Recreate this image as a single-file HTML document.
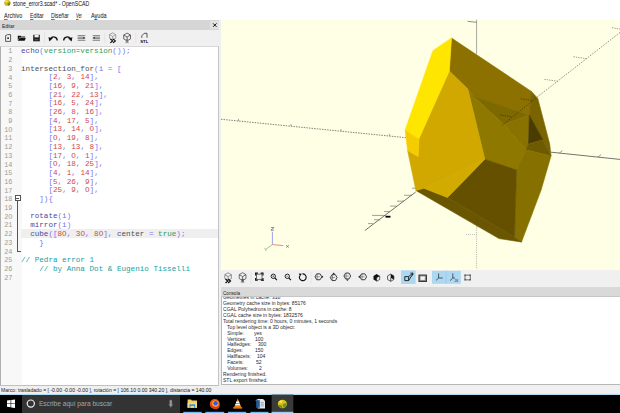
<!DOCTYPE html>
<html><head><meta charset="utf-8">
<style>
*{margin:0;padding:0;box-sizing:border-box}
html,body{width:620px;height:413px;overflow:hidden;background:#fff;font-family:"Liberation Sans",sans-serif;position:relative}
.a{position:absolute}
.t{position:absolute;white-space:pre;line-height:1}
u{text-decoration-thickness:0.4px;text-underline-offset:0.6px;text-decoration-color:#777}
.cl{position:absolute;left:21px;font-family:"Liberation Mono",monospace;font-size:7.62px;line-height:8.7px;white-space:pre;color:#333}
.lnum{position:absolute;left:0;width:12.4px;text-align:right;font-family:"Liberation Mono",monospace;font-size:6.8px;line-height:8.7px;color:#9a9a9a}
.k{color:#4b4b9b}.g{color:#2aa05a}.p{color:#7676f2}.n{color:#d04848}.c{color:#20a0a0}.d{color:#505050}
.cn{position:absolute;font-size:5.6px;line-height:5.9px;white-space:pre;color:#2a2a2a;transform:scaleX(0.9);transform-origin:0 0}
</style></head><body>
<!-- title bar -->
<div class="a" style="left:0;top:0;width:620px;height:20px;background:#fff"></div>
<div class="t" style="left:13.2px;top:0.6px;font-size:6.8px;color:#111;transform:scaleX(0.77);transform-origin:0 0">stone_error3.scad* - OpenSCAD</div>
<div class="t" style="left:3.9px;top:13.0px;font-size:6.4px;color:#111;transform:scaleX(0.858);transform-origin:0 0"><u>A</u>rchivo</div>
<div class="t" style="left:29.8px;top:13.0px;font-size:6.4px;color:#111;transform:scaleX(0.820);transform-origin:0 0"><u>E</u>ditar</div>
<div class="t" style="left:51.1px;top:13.0px;font-size:6.4px;color:#111;transform:scaleX(0.803);transform-origin:0 0"><u>D</u>iseñar</div>
<div class="t" style="left:76.3px;top:13.0px;font-size:6.4px;color:#111;transform:scaleX(0.614);transform-origin:0 0"><u>V</u>er</div>
<div class="t" style="left:91.4px;top:13.0px;font-size:6.4px;color:#111;transform:scaleX(0.865);transform-origin:0 0">A<u>y</u>uda</div>

<!-- editor dock -->
<div class="a" style="left:0;top:20px;width:219px;height:9.5px;background:#d6d6d6"></div>
<div class="t" style="left:1.9px;top:23.6px;font-size:5.4px;color:#1a1a1a;transform:scaleX(0.89);transform-origin:0 0">Editar</div>
<div class="a" style="left:209.5px;top:20.5px;width:9.5px;height:8.8px;background:#e2e2e2"></div>

<div class="a" style="left:0;top:29.5px;width:219px;height:16px;background:#f0f0f0"></div>
<div class="a" style="left:0;top:45.5px;width:219px;height:340px;background:#fff;border-left:1px solid #b0b0b0;border-right:1px solid #c4c4c4;border-top:1px solid #d8d8d8;border-bottom:1px solid #c0c0c0"></div>
<div class="a" style="left:1px;top:46.5px;width:20.5px;height:338px;background:#f8f8f8"></div>
<div class="a" style="left:21px;top:229.3px;width:197px;height:8.6px;background:#efefef"></div>
<div class="a" style="left:14.6px;top:194.8px;width:6.2px;height:6.2px;border:0.8px solid #555;background:#fff"></div>
<div class="a" style="left:16px;top:197.5px;width:3.4px;height:0.8px;background:#555"></div>
<div class="a" style="left:17.3px;top:201px;width:0.8px;height:50.5px;background:#555"></div>
<div class="a" style="left:17.3px;top:250.8px;width:3.8px;height:0.8px;background:#555"></div>

<div class="cl" style="top:47.10px"><span class="k">echo</span><span class="p">(</span><span class="g">version=version</span><span class="p">());</span></div>
<div class="lnum" style="top:47.40px">1</div>
<div class="cl" style="top:55.80px"></div>
<div class="lnum" style="top:56.10px">2</div>
<div class="cl" style="top:64.50px"><span class="d">intersection_for</span><span class="p">(i = [</span></div>
<div class="lnum" style="top:64.80px">3</div>
<div class="cl" style="top:73.20px">      <span class="p">[</span><span class="n">2</span><span class="p">, </span><span class="n">3</span><span class="p">, </span><span class="n">14</span><span class="p">],</span></div>
<div class="lnum" style="top:73.50px">4</div>
<div class="cl" style="top:81.90px">      <span class="p">[</span><span class="n">16</span><span class="p">, </span><span class="n">9</span><span class="p">, </span><span class="n">21</span><span class="p">],</span></div>
<div class="lnum" style="top:82.20px">5</div>
<div class="cl" style="top:90.60px">      <span class="p">[</span><span class="n">21</span><span class="p">, </span><span class="n">22</span><span class="p">, </span><span class="n">13</span><span class="p">],</span></div>
<div class="lnum" style="top:90.90px">6</div>
<div class="cl" style="top:99.30px">      <span class="p">[</span><span class="n">16</span><span class="p">, </span><span class="n">5</span><span class="p">, </span><span class="n">24</span><span class="p">],</span></div>
<div class="lnum" style="top:99.60px">7</div>
<div class="cl" style="top:108.00px">      <span class="p">[</span><span class="n">26</span><span class="p">, </span><span class="n">8</span><span class="p">, </span><span class="n">16</span><span class="p">],</span></div>
<div class="lnum" style="top:108.30px">8</div>
<div class="cl" style="top:116.70px">      <span class="p">[</span><span class="n">4</span><span class="p">, </span><span class="n">17</span><span class="p">, </span><span class="n">5</span><span class="p">],</span></div>
<div class="lnum" style="top:117.00px">9</div>
<div class="cl" style="top:125.40px">      <span class="p">[</span><span class="n">13</span><span class="p">, </span><span class="n">14</span><span class="p">, </span><span class="n">O</span><span class="p">],</span></div>
<div class="lnum" style="top:125.70px">1O</div>
<div class="cl" style="top:134.10px">      <span class="p">[</span><span class="n">O</span><span class="p">, </span><span class="n">19</span><span class="p">, </span><span class="n">8</span><span class="p">],</span></div>
<div class="lnum" style="top:134.40px">11</div>
<div class="cl" style="top:142.80px">      <span class="p">[</span><span class="n">13</span><span class="p">, </span><span class="n">13</span><span class="p">, </span><span class="n">8</span><span class="p">],</span></div>
<div class="lnum" style="top:143.10px">12</div>
<div class="cl" style="top:151.50px">      <span class="p">[</span><span class="n">17</span><span class="p">, </span><span class="n">O</span><span class="p">, </span><span class="n">1</span><span class="p">],</span></div>
<div class="lnum" style="top:151.80px">13</div>
<div class="cl" style="top:160.20px">      <span class="p">[</span><span class="n">O</span><span class="p">, </span><span class="n">18</span><span class="p">, </span><span class="n">25</span><span class="p">],</span></div>
<div class="lnum" style="top:160.50px">14</div>
<div class="cl" style="top:168.90px">      <span class="p">[</span><span class="n">4</span><span class="p">, </span><span class="n">1</span><span class="p">, </span><span class="n">14</span><span class="p">],</span></div>
<div class="lnum" style="top:169.20px">15</div>
<div class="cl" style="top:177.60px">      <span class="p">[</span><span class="n">5</span><span class="p">, </span><span class="n">26</span><span class="p">, </span><span class="n">9</span><span class="p">],</span></div>
<div class="lnum" style="top:177.90px">16</div>
<div class="cl" style="top:186.30px">      <span class="p">[</span><span class="n">25</span><span class="p">, </span><span class="n">9</span><span class="p">, </span><span class="n">O</span><span class="p">],</span></div>
<div class="lnum" style="top:186.60px">17</div>
<div class="cl" style="top:195.00px">    <span class="p">]){</span></div>
<div class="lnum" style="top:195.30px">18</div>
<div class="cl" style="top:203.70px"></div>
<div class="lnum" style="top:204.00px">19</div>
<div class="cl" style="top:212.40px">  <span class="k">rotate</span><span class="p">(i)</span></div>
<div class="lnum" style="top:212.70px">2O</div>
<div class="cl" style="top:221.10px">  <span class="k">mirror</span><span class="p">(i)</span></div>
<div class="lnum" style="top:221.40px">21</div>
<div class="cl" style="top:229.80px">  <span class="k">cube</span><span class="p">([</span><span class="n">8O</span><span class="p">, </span><span class="n">3O</span><span class="p">, </span><span class="n">8O</span><span class="p">], </span><span class="d">center</span><span class="p"> = </span><span class="g">true</span><span class="p">);</span></div>
<div class="lnum" style="top:230.10px">22</div>
<div class="cl" style="top:238.50px">    <span class="p">}</span></div>
<div class="lnum" style="top:238.80px">23</div>
<div class="cl" style="top:247.20px"></div>
<div class="lnum" style="top:247.50px">24</div>
<div class="cl" style="top:255.90px"><span class="c">// Pedra error 1</span></div>
<div class="lnum" style="top:256.20px">25</div>
<div class="cl" style="top:264.60px">    <span class="c">// by Anna Dot &amp; Eugenio Tisselli</span></div>
<div class="lnum" style="top:264.90px">26</div>
<div class="cl" style="top:273.30px"></div>
<div class="lnum" style="top:273.60px">27</div>

<!-- 3D view -->
<div class="a" style="left:219px;top:20px;width:401px;height:250px;background:#f0f0f0"></div>
<div class="a" style="left:221px;top:20px;width:399px;height:249.5px;background:#ffffe5"></div>
<svg class="a" style="left:0;top:0" width="620" height="413" viewBox="0 0 620 413" id="view">
<line x1="476.6" y1="19.5" x2="476.6" y2="54" stroke="#a8a8a0" stroke-width="1"/>
<line x1="467.6" y1="21.3" x2="476.6" y2="22.3" stroke="#606060" stroke-width="0.7"/>
<line x1="221" y1="119.25" x2="406" y2="137.7" stroke="#5a5a5a" stroke-width="0.75" stroke-dasharray="1.5 1.1"/>
<line x1="238.5" y1="118.79" x2="238.5" y2="120.99" stroke="#707070" stroke-width="0.6"/>
<line x1="291" y1="124.03" x2="291" y2="126.23" stroke="#707070" stroke-width="0.6"/>
<line x1="341" y1="129.01" x2="341" y2="131.21" stroke="#707070" stroke-width="0.6"/>
<line x1="389.4" y1="133.84" x2="389.4" y2="136.04" stroke="#707070" stroke-width="0.6"/>
<line x1="620" y1="32.5" x2="536" y2="98" stroke="#606060" stroke-width="0.7" stroke-dasharray="1.5 1.3"/>
<line x1="551" y1="152.2" x2="620" y2="159.4" stroke="#505050" stroke-width="0.8"/>
<line x1="415.7" y1="192" x2="364.9" y2="230.5" stroke="#505050" stroke-width="0.8"/>
<line x1="476.6" y1="227.6" x2="476.6" y2="269.5" stroke="#909090" stroke-width="0.7" stroke-dasharray="1 1.2"/>
<line x1="466" y1="234.6" x2="476.6" y2="234.6" stroke="#909090" stroke-width="0.6" stroke-dasharray="1 1"/>
<line x1="412" y1="188.2" x2="417" y2="188.2" stroke="#606060" stroke-width="0.6"/>
<line x1="404" y1="195.3" x2="412" y2="195.3" stroke="#606060" stroke-width="0.6"/>
<line x1="397" y1="201.2" x2="404" y2="201.2" stroke="#606060" stroke-width="0.6"/>
<line x1="390" y1="206.1" x2="397" y2="206.1" stroke="#606060" stroke-width="0.6"/>
<line x1="384" y1="211.6" x2="390" y2="211.6" stroke="#606060" stroke-width="0.6"/>
<line x1="372" y1="215.4" x2="386" y2="215.4" stroke="#606060" stroke-width="0.6"/>
<line x1="374" y1="219.8" x2="380" y2="219.8" stroke="#606060" stroke-width="0.6"/>
<line x1="368" y1="223.6" x2="373" y2="223.6" stroke="#606060" stroke-width="0.6"/>
<rect x="385.5" y="215.8" width="5" height="1.8" fill="#000"/>
<line x1="559.4" y1="153.0736" x2="562.4" y2="150.5736" stroke="#505050" stroke-width="0.6"/>
<line x1="598" y1="157.088" x2="601" y2="154.588" stroke="#505050" stroke-width="0.6"/>
<line x1="573.41" y1="56.70" x2="586.41" y2="58.70" stroke="#6a6a6a" stroke-width="0.65" stroke-dasharray="1.4 1"/>
<line x1="544.44" y1="79.30" x2="557.44" y2="81.30" stroke="#6a6a6a" stroke-width="0.65" stroke-dasharray="1.4 1"/>
<line x1="612" y1="27.6" x2="620" y2="29.2" stroke="#6a6a6a" stroke-width="0.65" stroke-dasharray="1.4 1"/>
<line x1="272.4" y1="244.6" x2="272.4" y2="231.8" stroke="#8888f0" stroke-width="0.8"/>
<line x1="272.4" y1="244.6" x2="283.2" y2="245.6" stroke="#f06a6a" stroke-width="0.8"/>
<line x1="272.4" y1="244.6" x2="267.4" y2="248.2" stroke="#50d070" stroke-width="0.8"/>
<path d="M271,227.6 H273.8 L271,230.2 H273.8" fill="none" stroke="#404040" stroke-width="0.6"/>
<path d="M286.2,245.2 L288.8,247.6 M288.8,245.2 L286.2,247.6" fill="none" stroke="#505050" stroke-width="0.6"/>
<path d="M264.6,248.2 L265.8,249.4 L267,248.2 M265.8,249.4 V250.8" fill="none" stroke="#707070" stroke-width="0.6"/>
<polygon points="451.5,38.0 531.5,91.5 529.3,115.1 473.0,96.0 467.8,89.0 449.3,71.0" fill="#8c7000" stroke="#8c7000" stroke-width="0.6" stroke-linejoin="round"/>
<polygon points="531.5,91.5 537.8,98.5 549.7,143.9 551.0,156.0 542.9,139.7 529.3,115.1" fill="#7a6400" stroke="#7a6400" stroke-width="0.6" stroke-linejoin="round"/>
<polygon points="473.0,96.0 529.3,115.1 503.6,124.6" fill="#7e6800" stroke="#7e6800" stroke-width="0.6" stroke-linejoin="round"/>
<polygon points="503.6,124.6 529.3,115.1 528.5,143.9 525.9,149.8" fill="#8a7200" stroke="#8a7200" stroke-width="0.6" stroke-linejoin="round"/>
<polygon points="529.3,115.1 528.5,143.9 542.9,139.7" fill="#4a3c00" stroke="#4a3c00" stroke-width="0.6" stroke-linejoin="round"/>
<polygon points="528.5,143.9 542.9,139.7 551.0,156.0 525.9,149.8" fill="#6e5a00" stroke="#6e5a00" stroke-width="0.6" stroke-linejoin="round"/>
<polygon points="467.8,89.0 473.0,96.0 503.6,124.6 525.9,149.8 516.5,170.0 484.8,159.2" fill="#8f7800" stroke="#8f7800" stroke-width="0.6" stroke-linejoin="round"/>
<polygon points="525.9,149.8 551.0,156.0 541.1,190.0 521.5,242.0 514.5,237.5 516.5,170.0" fill="#857000" stroke="#857000" stroke-width="0.6" stroke-linejoin="round"/>
<polygon points="484.8,159.2 516.5,170.0 514.5,237.5 447.5,197.5" fill="#655000" stroke="#655000" stroke-width="0.6" stroke-linejoin="round"/>
<polygon points="415.9,190.5 423.9,188.3 447.5,197.5 514.5,237.5 521.5,242.0 499.0,238.6" fill="#6a5600" stroke="#6a5600" stroke-width="0.6" stroke-linejoin="round"/>
<polygon points="423.9,188.3 484.8,159.2 447.5,197.5" fill="#d2ab00" stroke="#d2ab00" stroke-width="0.6" stroke-linejoin="round"/>
<polygon points="449.3,71.0 467.8,89.0 484.8,159.2 423.9,188.3 415.9,190.5 407.6,150.6 418.2,156.5 419.0,138.5" fill="#d0a800" stroke="#d0a800" stroke-width="0.6" stroke-linejoin="round"/>
<polygon points="405.2,129.8 419.0,138.5 418.2,156.5 407.6,150.6" fill="#f5cc00" stroke="#f5cc00" stroke-width="0.6" stroke-linejoin="round"/>
<polygon points="451.5,38.0 449.3,71.0 419.0,138.5 405.2,129.8 433.0,50.5" fill="#ffe600" stroke="#ffe600" stroke-width="0.6" stroke-linejoin="round"/>
<line x1="477" y1="219.5" x2="477" y2="228" stroke="#4a3c00" stroke-width="0.6" stroke-dasharray="1 1.2"/>
<line x1="536" y1="98" x2="502" y2="125.5" stroke="#3a3000" stroke-width="0.7" stroke-dasharray="1.2 1.6"/>
<line x1="520.69" y1="98.80" x2="532.69" y2="100.60" stroke="#3a3000" stroke-width="0.65" stroke-dasharray="1.4 1"/>
<line x1="499.92" y1="115.00" x2="511.92" y2="116.80" stroke="#3a3000" stroke-width="0.65" stroke-dasharray="1.4 1"/>

</svg>

<!-- viewer toolbar -->
<div class="a" style="left:219px;top:269.5px;width:401px;height:18px;background:#f0f0f0"></div>
<!-- console -->
<div class="a" style="left:219px;top:287.5px;width:401px;height:98px;background:#f0f0f0"></div>
<div class="a" style="left:220.8px;top:287.4px;width:399.2px;height:10px;background:#d9d9d9;border-bottom:0.7px solid #c6c6c6"></div>
<div class="t" style="left:222.9px;top:290.5px;font-size:5.4px;color:#1a1a1a;transform:scaleX(0.86);transform-origin:0 0">Consola</div>
<div class="a" style="left:220.8px;top:297.3px;width:399.2px;height:88.2px;background:#fff;border-left:1px solid #b8b8b8;border-bottom:1px solid #b8b8b8"></div>
<div class="a" style="left:219px;top:297.3px;width:401px;height:88px;overflow:hidden"><div class="cn" style="left:3.9px;top:-2.00px">Geometries in cache: 318</div>
<div class="cn" style="left:3.9px;top:3.90px">Geometry cache size in bytes: 85176</div>
<div class="cn" style="left:3.9px;top:9.80px">CGAL Polyhedrons in cache: 8</div>
<div class="cn" style="left:3.9px;top:15.70px">CGAL cache size in bytes: 1832576</div>
<div class="cn" style="left:3.9px;top:21.60px">Total rendering time: 0 hours, 0 minutes, 1 seconds</div>
<div class="cn" style="left:3.9px;top:27.50px">   Top level object is a 3D object:</div>
<div class="cn" style="left:3.9px;top:33.40px">   Simple:</div>
<div class="cn" style="left:35.40px;top:33.40px">yes</div>
<div class="cn" style="left:3.9px;top:39.30px">   Vertices:</div>
<div class="cn" style="left:36.40px;top:39.30px">100</div>
<div class="cn" style="left:3.9px;top:45.20px">   Halfedges:</div>
<div class="cn" style="left:39.40px;top:45.20px">300</div>
<div class="cn" style="left:3.9px;top:51.10px">   Edges:</div>
<div class="cn" style="left:36.40px;top:51.10px">150</div>
<div class="cn" style="left:3.9px;top:57.00px">   Halffacets:</div>
<div class="cn" style="left:38.40px;top:57.00px">104</div>
<div class="cn" style="left:3.9px;top:62.90px">   Facets:</div>
<div class="cn" style="left:37.40px;top:62.90px">52</div>
<div class="cn" style="left:3.9px;top:68.80px">   Volumes:</div>
<div class="cn" style="left:40.30px;top:68.80px">2</div>
<div class="cn" style="left:3.9px;top:74.70px">Rendering finished.</div>
<div class="cn" style="left:3.9px;top:80.60px">STL export finished.</div></div>

<!-- status bar -->
<div class="a" style="left:0;top:385.5px;width:620px;height:8.5px;background:#f0f0f0"></div>
<div class="t" style="left:1px;top:388px;font-size:5.6px;color:#1a1a1a;transform:scaleX(0.91);transform-origin:0 0">Marco: trasladado = [ -0.00 -0.00 -0.00 ], rotación = [ 106.10 0.00 340.20 ], distancia = 140.00</div>

<!-- taskbar -->
<div class="a" style="left:0;top:394.5px;width:620px;height:18.5px;background:#000"></div>
<div class="a" style="left:22.1px;top:395px;width:158px;height:18px;background:#333"></div>
<div class="t" style="left:38.9px;top:401.4px;font-size:6.6px;color:#a6a6a6">Escribe aquí para buscar</div>
<svg class="a" style="left:0;top:0" width="620" height="413" viewBox="0 0 620 413">
<path d="M213.1,23.4 L216.5,26.8 M216.5,23.4 L213.1,26.8" stroke="#111" stroke-width="1"/>
<path d="M5.6,35.6 L7.6,34.6 L10.6,34.6 L10.6,41.4 L5.6,41.4 Z" fill="none" stroke="#333" stroke-width="0.8"/>
<rect x="7.3" y="37.4" width="1.6" height="1.6" fill="#222"/>
<path d="M17.8,35.8 L20.6,35.8 L21.2,36.6 L25.2,36.6 L25.2,37.6 L19.4,37.6 L17.8,40.6 Z" fill="#111"/>
<path d="M19.6,38 L25.8,38 L24.6,40.8 L17.8,40.8 Z" fill="#111"/>
<path d="M33.2,34.8 L39.8,34.8 L39.8,41.3 L33.2,41.3 Z" fill="#1a1a1a"/>
<rect x="34.5" y="34.8" width="4.2" height="2.6" fill="#f0f0f0"/>
<rect x="34.6" y="39" width="3.8" height="1.4" fill="#555"/>
<line x1="44.5" y1="32.8" x2="44.5" y2="43" stroke="#dadada" stroke-width="0.6"/>
<line x1="104.8" y1="32.8" x2="104.8" y2="43" stroke="#dadada" stroke-width="0.6"/>
<line x1="135.8" y1="32.8" x2="135.8" y2="43" stroke="#dadada" stroke-width="0.6"/>
<path d="M57.2,40.4 A3.5,3.4 0 0 0 50.6,38.8" fill="none" stroke="#111" stroke-width="1.3"/>
<path d="M48.4,37.2 L52.8,38.2 L49.4,41.4 Z" fill="#111"/>
<path d="M63.7,40.4 A3.5,3.4 0 0 1 70.3,38.8" fill="none" stroke="#111" stroke-width="1.3"/>
<path d="M72.5,37.2 L68.1,38.2 L71.5,41.4 Z" fill="#111"/>
<path d="M77.6,35.6 H85.4 M77.6,37.2 H83 M77.6,38.6 H83 M77.6,40.3 H85.4" stroke="#555" stroke-width="0.7"/>
<path d="M83.2,36.6 L85.6,37.9 L83.2,39.2 Z" fill="#333"/>
<path d="M92.6,35.6 H100 M95,37.2 H100 M95,38.6 H100 M92.6,40.3 H100" stroke="#555" stroke-width="0.7"/>
<path d="M94.8,36.6 L92.4,37.9 L94.8,39.2 Z" fill="#333"/>
<polygon points="112.60,32.80 109.48,34.60 109.48,38.20 112.60,40.00 115.72,38.20 115.72,34.60" fill="none" stroke="#7a7a7a" stroke-width="0.65"/><path d="M109.48,34.60 L112.60,36.40 L115.72,34.60 M112.60,36.40 L112.60,40.00" stroke="#7a7a7a" stroke-width="0.65" fill="none"/>
<path d="M110.3,38.9 L112.6,40.9 L110.3,42.9 M113,38.9 L115.3,40.9 L113,42.9" fill="none" stroke="#111" stroke-width="1.25"/>
<polygon points="127.10,33.10 123.72,35.05 123.72,38.95 127.10,40.90 130.48,38.95 130.48,35.05" fill="none" stroke="#3a3a3a" stroke-width="0.75"/><path d="M123.72,35.05 L127.10,37.00 L130.48,35.05 M127.10,37.00 L127.10,40.90" stroke="#3a3a3a" stroke-width="0.75" fill="none"/>
<path d="M126.3,39.6 L127.9,39.6 L127.9,42 L126.3,42 Z M125.4,42.6 H128.8" fill="#777" stroke="#777" stroke-width="0.6"/>
<path d="M141.8,37.8 V35.8 L144.2,33.3 H147 V37.8" fill="none" stroke="#222" stroke-width="0.75" stroke-linejoin="miter"/>
<text x="144.3" y="42.6" font-family="Liberation Sans" font-weight="bold" font-size="4.3" text-anchor="middle" fill="#111">STL</text>
<polygon points="228.10,272.80 224.81,274.70 224.81,278.50 228.10,280.40 231.39,278.50 231.39,274.70" fill="none" stroke="#6a6a6a" stroke-width="0.7"/><path d="M224.81,274.70 L228.10,276.60 L231.39,274.70 M228.10,276.60 L228.10,280.40" stroke="#6a6a6a" stroke-width="0.7" fill="none"/>
<path d="M225.5,279 L227.8,281 L225.5,283 M228.2,279 L230.5,281 L228.2,283" fill="none" stroke="#111" stroke-width="1.25"/>
<polygon points="242.60,272.70 239.22,274.65 239.22,278.55 242.60,280.50 245.98,278.55 245.98,274.65" fill="none" stroke="#444" stroke-width="0.75"/><path d="M239.22,274.65 L242.60,276.60 L245.98,274.65 M242.60,276.60 L242.60,280.50" stroke="#444" stroke-width="0.75" fill="none"/>
<path d="M241.8,279 L243.4,279 L243.4,281.6 L241.8,281.6 Z M240.8,282.2 H244.4" fill="#555" stroke="#555" stroke-width="0.6"/>
<line x1="251" y1="272" x2="251" y2="284" stroke="#dcdcdc" stroke-width="0.6"/>
<rect x="256.6" y="274.1" width="5.4" height="5.2" fill="none" stroke="#333" stroke-width="0.7"/>
<path d="M255.6,275.4 V273.1 H257.9 M260.7,273.1 H263 V275.4 M255.6,278 V280.3 H257.9 M260.7,280.3 H263 V278" fill="none" stroke="#111" stroke-width="1.1"/>
<line x1="261.8" y1="279.1" x2="263.6" y2="281" stroke="#111" stroke-width="1"/>
<circle cx="273.3" cy="276.3" r="2.2" fill="none" stroke="#111" stroke-width="0.9"/>
<line x1="274.8" y1="277.8" x2="276.90000000000003" y2="280.2" stroke="#111" stroke-width="1.1"/>
<line x1="272.3" y1="276.3" x2="274.3" y2="276.3" stroke="#333" stroke-width="0.5"/>
<circle cx="287.3" cy="276.3" r="2.2" fill="none" stroke="#111" stroke-width="0.9"/>
<line x1="288.8" y1="277.8" x2="290.90000000000003" y2="280.2" stroke="#111" stroke-width="1.1"/>
<line x1="286.3" y1="276.3" x2="288.3" y2="276.3" stroke="#333" stroke-width="0.5"/>
<line x1="273.3" y1="275.3" x2="273.3" y2="277.3" stroke="#333" stroke-width="0.5"/>
<path d="M299.6,276 A3.4,3.4 0 1 0 302.4,273.9" fill="none" stroke="#111" stroke-width="1.15"/>
<path d="M298.8,273.6 L301.8,273.8 L300,276.6 Z" fill="#111"/>
<line x1="311.2" y1="272" x2="311.2" y2="284" stroke="#e2e2e2" stroke-width="0.6"/>
<polygon points="321.80,276.80 320.10,273.86 316.70,273.86 315.00,276.80 316.70,279.74 320.10,279.74" fill="none" stroke="#222" stroke-width="0.85"/><path d="M317.20,273.90 V279.70 M315.20,276.80 H319.90" stroke="#444" stroke-width="0.5"/>
<path d="M321.8,275.4 L323.4,276.8 L321.8,278.2 Z" fill="#222"/>
<polygon points="337.10,277.60 335.40,274.66 332.00,274.66 330.30,277.60 332.00,280.54 335.40,280.54" fill="none" stroke="#222" stroke-width="0.85"/><path d="M332.50,274.70 V280.50 M330.50,277.60 H335.20" stroke="#444" stroke-width="0.5"/>
<path d="M332.3,274.2 L333.7,272.6 L335.1,274.2 Z" fill="#222"/>
<polygon points="350.70,276.00 349.00,273.06 345.60,273.06 343.90,276.00 345.60,278.94 349.00,278.94" fill="none" stroke="#222" stroke-width="0.85"/><path d="M346.10,273.10 V278.90 M344.10,276.00 H348.80" stroke="#444" stroke-width="0.5"/>
<path d="M345.9,279.4 L347.3,281 L348.7,279.4 Z" fill="#222"/>
<polygon points="366.60,276.80 364.90,273.86 361.50,273.86 359.80,276.80 361.50,279.74 364.90,279.74" fill="none" stroke="#222" stroke-width="0.85"/><path d="M362.00,273.90 V279.70 M360.00,276.80 H364.70" stroke="#444" stroke-width="0.5"/>
<path d="M359.8,275.4 L358.2,276.8 L359.8,278.2 Z" fill="#222"/>
<polygon points="376.60,274.10 373.48,275.90 373.48,279.50 376.60,281.30 379.72,279.50 379.72,275.90" fill="#111"/>
<polygon points="376.60,277.70 379.72,275.90 379.72,279.50 376.60,281.30" fill="#f0f0f0" stroke="#111" stroke-width="0.5"/>
<polygon points="390.70,274.10 387.58,275.90 387.58,279.50 390.70,281.30 393.82,279.50 393.82,275.90" fill="none" stroke="#222" stroke-width="0.7"/>
<polygon points="390.7,277.7 390.70,274.10 393.82,275.90 393.82,279.50" fill="#111"/>
<line x1="390.7" y1="277.7" x2="390.70" y2="281.30" stroke="#222" stroke-width="0.7"/>
<rect x="401" y="270.4" width="14.6" height="13.6" fill="#add8f2"/>
<rect x="432" y="270.8" width="28.8" height="13" fill="#add8f2"/>
<line x1="446.1" y1="270.8" x2="446.1" y2="283.8" stroke="#8cc4e8" stroke-width="0.5"/>
<path d="M404.8,276.6 L408.6,276.6 L412.6,273.4 M404.8,276.6 L404.8,280.6 L408.6,280.6 L408.6,276.6 M408.6,280.6 L412.8,274" fill="none" stroke="#1a1a1a" stroke-width="0.9"/>
<path d="M410.4,273.2 L413,273 L412.6,275.4" fill="none" stroke="#1a1a1a" stroke-width="0.8"/>
<rect x="418.4" y="274.4" width="8.6" height="7.6" fill="#3a3a3a" rx="0.6"/>
<rect x="419.6" y="275.6" width="6.2" height="5.2" fill="#9a9a9a"/>
<rect x="420.6" y="276.5" width="4.2" height="3.4" fill="#f4f4f4"/>
<path d="M438.6,273.4 V278 H442.8 M438.6,278 L436,280.4" fill="none" stroke="#222" stroke-width="0.7"/>
<path d="M452.8,273.4 V278 H455 M452.8,278 L450,280.6" fill="none" stroke="#222" stroke-width="0.7"/>
<text x="456.2" y="281.6" font-family="Liberation Sans" font-size="3.2" text-anchor="middle" fill="#222">18</text>
<rect x="465" y="275.1" width="5.2" height="4.8" fill="none" stroke="#333" stroke-width="0.7"/>
<path d="M464.2,275.1 H466 M469.2,275.1 H471 M464.2,279.9 H466 M469.2,279.9 H471" stroke="#333" stroke-width="0.7"/>
<rect x="0" y="393.9" width="620" height="0.9" fill="#9fd4f0"/>
<path d="M7,400.6 L10.6,400.1 L10.6,403.4 L7,403.4 Z M11.2,400 L15,399.5 L15,403.4 L11.2,403.4 Z M7,404 L10.6,404 L10.6,407.3 L7,406.8 Z M11.2,404 L15,404 L15,407.9 L11.2,407.4 Z" fill="#fff"/>
<circle cx="30.8" cy="403.6" r="3.6" fill="none" stroke="#f0f0f0" stroke-width="1.2"/>
<path d="M169.8,400.2 h2 v4 h-2 z M168.8,404.6 h4 l-2,2.4 z M170.8,407 v1.6" fill="#9a9a9a" stroke="#9a9a9a" stroke-width="0.3"/>
<path d="M187.6,399.4 h3.4 l0.8,1 h5.2 v7.3 h-9.4 z" fill="#f5cf6a"/>
<path d="M187.6,403 h9.4 v4.7 h-9.4 z" fill="#f8dc82"/>
<path d="M189.4,404.2 h5.8 v3.5 h-1.2 v-1.6 h-3.4 v1.6 h-1.2 z" fill="#2f9ad6"/>
<circle cx="214.8" cy="404" r="5" fill="#e8551c"/>
<circle cx="215.4" cy="403.6" r="3.2" fill="#ffb020"/>
<circle cx="215.6" cy="403.3" r="2.2" fill="#3a5bd0"/>
<path d="M210,404 Q211,409 216,409.2 Q219.6,409 220,405 Q217,408 213.4,406.6 Z" fill="#d83a1c"/>
<path d="M237.7,398.4 L241.4,407.4 L234,407.4 Z" fill="#f7840b"/>
<path d="M236.4,401.6 h2.6 l0.5,1.3 h-3.6 z M235.6,404 h4.2 l0.5,1.2 h-5.2 z" fill="#fff"/>
<rect x="233.2" y="407.2" width="9" height="1.4" fill="#f08a10"/>
<path d="M257.6,399 h5.4 l2,2 v7.4 h-7.4 z" fill="#dfe6ee"/>
<path d="M256.2,400.2 v7.6 h3.6 v-7.6 z" fill="#1f5f9a"/>
<path d="M260.6,402.6 h3.2 M260.6,404.2 h3.2 M260.6,405.8 h3.2" stroke="#666" stroke-width="0.5"/>
<path d="M255.6,400.6 q2,-2 4.6,-1.2" fill="none" stroke="#cfd8e0" stroke-width="0.6"/>
<rect x="271.6" y="394.6" width="21.7" height="18.4" fill="#3a3a3a"/>
<ellipse cx="282.4" cy="404" rx="4.6" ry="4.2" fill="#d8c21a"/>
<path d="M278.4,402 Q280,399.8 282.6,400.6 L281.6,403 Z" fill="#f4e85a"/>
<path d="M282.4,404.4 L286.6,402.8 Q286.8,406.8 283.8,408 Z" fill="#5a9a2a"/>
<path d="M278.2,404.8 Q279.6,408.2 282.6,408.3 L281.6,405.4 Z" fill="#8a7a10"/>
<rect x="183.3" y="411.8" width="18.399999999999977" height="1.2" fill="#76b9ed"/>
<rect x="205.4" y="411.8" width="18.799999999999983" height="1.2" fill="#76b9ed"/>
<rect x="228" y="411.8" width="18.19999999999999" height="1.2" fill="#76b9ed"/>
<rect x="250.4" y="411.8" width="18.099999999999994" height="1.2" fill="#76b9ed"/>
<rect x="271.6" y="411.8" width="21.7" height="1.2" fill="#99ccf2"/>
<ellipse cx="7.4" cy="3" rx="3.2" ry="2.9" fill="#d4b818"/>
<path d="M4.6,1.8 Q6,0 8.2,0.6 L7.2,2.8 Z" fill="#f2e45a"/>
<path d="M7.4,3.2 L10.4,2.2 Q10.4,5.2 8.4,5.8 Z" fill="#5c8c2a"/>

</svg>
</body></html>
